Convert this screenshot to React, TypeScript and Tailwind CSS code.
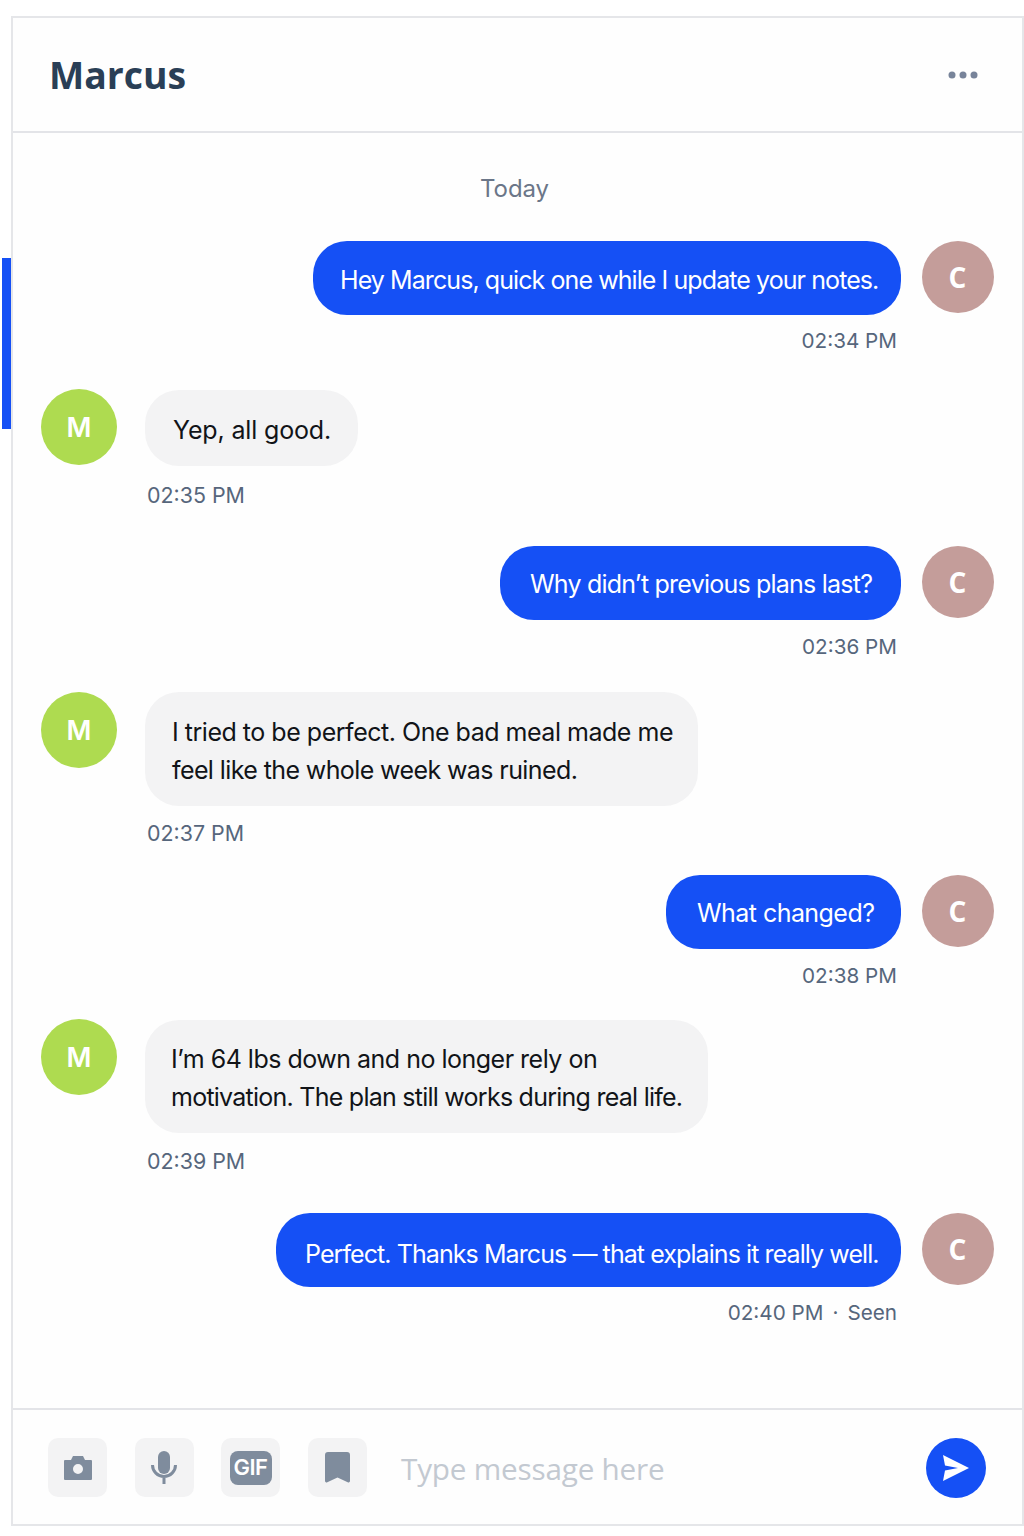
import React from 'react'

interface Msg {
  from: 'me' | 'them'
  lines: [string, string][]
  time: string
  seen?: boolean
  rowClass: string
  bubbleClass: string
  timeClass: string
}

const messages: Msg[] = [
  {
    from: 'me',
    lines: [['Hey Marcus, quick one while I update your notes.', 'tracking-[-0.92px]']],
    time: '02:34 PM',
    rowClass: 'mt-[37px]',
    bubbleClass: 'w-[588px] h-[74px] pl-[27px] pt-[6px]',
    timeClass: 'mt-[12px]',
  },
  {
    from: 'them',
    lines: [['Yep, all good.', 'tracking-[-0.15px]']],
    time: '02:35 PM',
    rowClass: 'mt-[34px]',
    bubbleClass: 'w-[213px] h-[76px] mt-[1px] pl-[28px] pt-[4px]',
    timeClass: 'mt-[15px]',
  },
  {
    from: 'me',
    lines: [['Why didn’t previous plans last?', 'tracking-[-0.78px]']],
    time: '02:36 PM',
    rowClass: 'mt-[37px]',
    bubbleClass: 'w-[401px] h-[74px] pl-[30px] pt-[4px]',
    timeClass: 'mt-[13px]',
  },
  {
    from: 'them',
    lines: [
      ['I tried to be perfect. One bad meal made me', 'tracking-[-0.48px]'],
      ['feel like the whole week was ruined.', 'tracking-[-0.6px]'],
    ],
    time: '02:37 PM',
    rowClass: 'mt-[31px]',
    bubbleClass: 'w-[553px] h-[114px] pl-[27px] pt-[4px]',
    timeClass: 'mt-[13px]',
  },
  {
    from: 'me',
    lines: [['What changed?', 'tracking-[-0.55px]']],
    time: '02:38 PM',
    rowClass: 'mt-[28px]',
    bubbleClass: 'w-[235px] h-[74px] pl-[31px] pt-[4px]',
    timeClass: 'mt-[13px]',
  },
  {
    from: 'them',
    lines: [
      ['I’m 64 lbs down and no longer rely on', 'tracking-[-0.5px]'],
      ['motivation. The plan still works during real life.', 'tracking-[-0.75px]'],
    ],
    time: '02:39 PM',
    rowClass: 'mt-[29px]',
    bubbleClass: 'w-[563px] h-[113px] mt-[1px] pl-[26px] pt-[3px] leading-[37px]',
    timeClass: 'mt-[14px]',
  },
  {
    from: 'me',
    lines: [['Perfect. Thanks Marcus — that explains it really well.', 'tracking-[-0.92px]']],
    time: '02:40 PM',
    seen: true,
    rowClass: 'mt-[38px]',
    bubbleClass: 'w-[625px] h-[74px] pl-[29px] pt-[10px]',
    timeClass: 'mt-[12px]',
  },
]

function Avatar({ from }: { from: 'me' | 'them' }) {
  if (from === 'me') {
    return (
      <div className="w-[72px] h-[72px] shrink-0 rounded-full bg-[#c49d9a] flex items-center justify-center text-white text-[28px] font-bold font-['Open_Sans',sans-serif] pr-[1px]">
        C
      </div>
    )
  }
  return (
    <div className="w-[76px] h-[76px] shrink-0 rounded-full bg-[#aedb50] flex items-center justify-center text-white text-[27px] font-semibold font-['Inter',sans-serif] pt-[2px]">
      M
    </div>
  )
}

function Message({ m }: { m: Msg }) {
  if (m.from === 'me') {
    return (
      <div className={m.rowClass}>
        <div className="flex justify-end gap-[21px] pr-[28px]">
          <div
            className={`${m.bubbleClass} rounded-[34px] bg-[#1550f5] text-white flex items-center text-[25px] whitespace-nowrap`}
          >
            <span className={m.lines[0][1]}>{m.lines[0][0]}</span>
          </div>
          <Avatar from="me" />
        </div>
        <div
          className={`${m.timeClass} pr-[125px] flex justify-end text-[20.7px] leading-[28px] text-[#56667c]`}
        >
          <span>{m.time}</span>
          {m.seen && (
            <>
              <span className="mx-[9px]">·</span>
              <span>Seen</span>
            </>
          )}
        </div>
      </div>
    )
  }
  return (
    <div className={m.rowClass}>
      <div className="flex items-start gap-[28px] pl-[28px]">
        <Avatar from="them" />
        <div
          className={`${m.bubbleClass} rounded-[34px] bg-[#f3f3f4] text-[#111418] flex flex-col justify-center text-[25px] leading-[38px] whitespace-nowrap`}
        >
          {m.lines.map(([text, tracking]) => (
            <span key={text} className={tracking}>
              {text}
            </span>
          ))}
        </div>
      </div>
      <div className={`${m.timeClass} pl-[134px] text-[21.4px] leading-[28px] text-[#56667c]`}>{m.time}</div>
    </div>
  )
}

function ToolButton({ children }: { children: React.ReactNode }) {
  return <div className="w-[59px] h-[59px] rounded-[10px] bg-[#f3f3f4] flex items-center justify-center">{children}</div>
}

export default function App() {
  return (
    <div className="relative w-[1024px] h-[1536px] bg-white font-['Inter',sans-serif] pt-[16px]">
      {/* blue tab left of the frame */}
      <div className="absolute left-[2px] top-[258px] w-[9px] h-[171px] bg-[#1550f5]" />

      <div className="ml-[11px] w-[1013px] h-[1510px] border-2 border-[#e5e6e9] bg-[#fefefe] flex flex-col">
        <header className="h-[115px] shrink-0 border-b-2 border-[#e3e4e8] pl-[36px] pr-[44px] flex items-center justify-between">
          <h1 className="text-[37.4px] font-bold text-[#2a3f56] font-['Open_Sans',sans-serif] leading-none">Marcus</h1>
          <svg width="30" height="8" viewBox="0 0 30 8" fill="#78849a">
            <circle cx="4" cy="4" r="3.5" />
            <circle cx="15" cy="4" r="3.5" />
            <circle cx="26" cy="4" r="3.5" />
          </svg>
        </header>

        <main className="flex-1">
          <div className="mt-[41px] text-center text-[24px] leading-[30px] tracking-[-0.1px] text-[#6b7688] pr-[6px]">Today</div>
          {messages.map((m) => (
            <Message key={m.time} m={m} />
          ))}
        </main>

        <footer className="h-[116px] shrink-0 border-t-2 border-[#e3e4e8] pl-[35px] pr-[36px] pt-[1px] flex items-center">
          <div className="flex gap-[27.5px]">
            <ToolButton>
              <svg width="30" height="26" viewBox="0 0 30 26" fill="#7f8c9d">
                <path fillRule="evenodd" d="M10 1h10l2 4h6a1 1 0 0 1 1 1v18a1 1 0 0 1-1 1H2a1 1 0 0 1-1-1V6a1 1 0 0 1 1-1h6zM15 9a5 5 0 1 0 0 10a5 5 0 0 0 0-10z" />
              </svg>
            </ToolButton>
            <ToolButton>
              <svg width="26" height="33" viewBox="0 0 26 33" fill="none">
                <rect x="7" y="0" width="12" height="23" rx="6" fill="#7f8c9d" />
                <path d="M1.5 14a11.5 11.5 0 0 0 23 0M13 26v7" stroke="#7f8c9d" strokeWidth="3" />
              </svg>
            </ToolButton>
            <ToolButton>
              <div className="w-[42px] h-[34px] rounded-[8px] bg-[#7f8c9d] text-white text-[22px] font-semibold flex items-center justify-center tracking-[-0.5px] font-['Inter',sans-serif]">
                GIF
              </div>
            </ToolButton>
            <ToolButton>
              <svg width="25" height="31" viewBox="0 0 25 31" fill="#7f8c9d">
                <path d="M3 0h19a3 3 0 0 1 3 3v26a1.5 1.5 0 0 1-2.3 1.2L12.5 25.5L2.3 30.2A1.5 1.5 0 0 1 0 29V3a3 3 0 0 1 3-3z" />
              </svg>
            </ToolButton>
          </div>
          <div className="ml-[34.5px] flex-1 pt-[4px] text-[29.7px] text-[#c3c9d1] font-['Open_Sans',sans-serif] tracking-[-0.2px]">
            Type message here
          </div>
          <div className="w-[60px] h-[60px] rounded-full bg-[#1550f5] flex items-center justify-center">
            <svg width="28" height="26" viewBox="0 0 28 26" fill="white">
              <path d="M1 0L27 13L1 26L3 15.5L16 13L3 10.5z" />
            </svg>
          </div>
        </footer>
      </div>
    </div>
  )
}
